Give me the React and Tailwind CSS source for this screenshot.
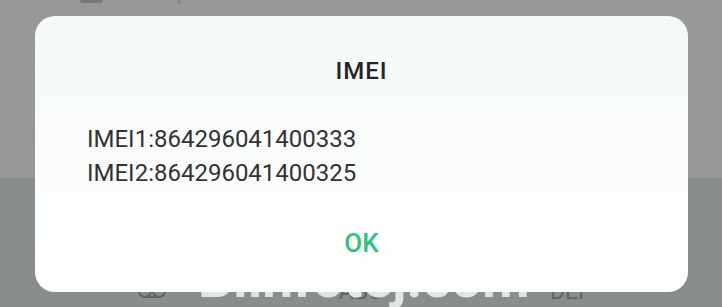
import React from "react";

const font = { fontFamily: "Roboto, 'Noto Sans', sans-serif" };

// voicemail glyph under key 1
const Voicemail = () => (
  <svg width="30" height="16" viewBox="0 0 30 16" fill="none" stroke="#5f6462" strokeWidth="2">
    <circle cx="8" cy="8" r="6" />
    <circle cx="22" cy="8" r="6" />
    <line x1="8" y1="14" x2="22" y2="14" />
  </svg>
);

const App = () => {
  return (
    <div className="relative w-[722px] h-[307px] overflow-hidden" style={font}>
      {/* page behind the dialog */}
      <div className="flex flex-col h-full">
        <div className="h-[178px] bg-[#989898]">
          <div className="flex items-center gap-6 pl-[80px] -mt-[21px]">
            <div className="w-[23px] h-[21px] rounded-[3px] bg-[#777]" />
            <span className="text-[22px] leading-[26px] text-[#7d7d7d]">Товарный знак</span>
          </div>
        </div>
        <div className="flex-1 bg-[#888e8c] flex flex-col justify-end">
          <div className="relative grid grid-cols-3 px-[47px] pb-[6px] text-[23px] leading-[18px] text-[#5f6462]">
            <div className="flex justify-center">
              <Voicemail />
            </div>
            <div className="flex justify-center">ABC</div>
            <div className="flex justify-center">DEF</div>
            <div className="absolute left-[198px] bottom-[3px] text-[55px] leading-[52px] font-bold text-[#e2e4e3]">
              Blinfotej.com
            </div>
          </div>
        </div>
      </div>

      {/* dialog */}
      <div className="absolute left-[35px] top-[16px] w-[653px] h-[276px] rounded-[20px] bg-gradient-to-b from-[#f5faf9] to-white flex flex-col">
        <div className="pt-[41px] text-center text-[24px] leading-[28px] font-medium tracking-[1px] text-[#262626]">
          IMEI
        </div>
        <div className="mt-[37px] px-[52px] text-[24px] leading-[34px] text-[#333]">
          <div>IMEI1:864296041400333</div>
          <div>IMEI2:864296041400325</div>
        </div>
        <button className="mt-[38px] mx-auto text-[26px] leading-[30px] font-medium text-[#2fc27b]">
          OK
        </button>
      </div>
    </div>
  );
};

export default App;
